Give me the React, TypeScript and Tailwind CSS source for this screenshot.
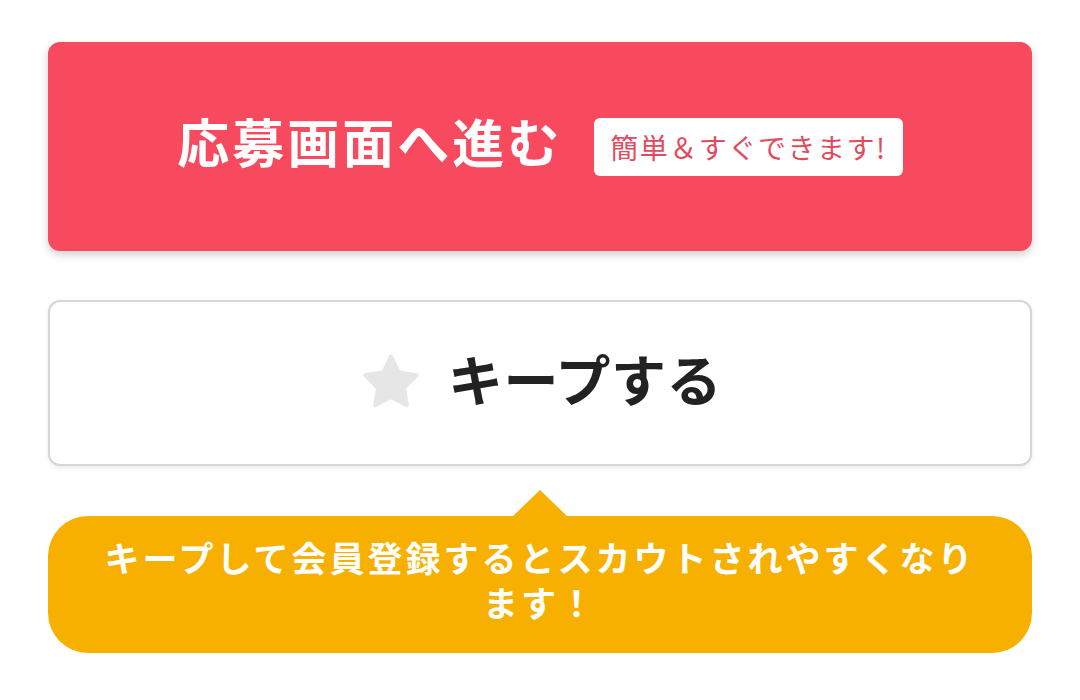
export default function App() {
  return (
    <div
      className="w-[1080px] h-[700px] bg-white px-12 pt-[42px]"
      style={{ fontFamily: '"Noto Sans CJK JP", "Noto Sans", sans-serif' }}
    >
      <button className="w-full h-[209px] rounded-xl bg-[#f74a5f] shadow-[0_4px_8px_rgba(0,0,0,0.18)] flex items-center justify-center gap-8">
        <span className="text-white font-bold text-[52px] leading-none tracking-[3px] mb-3">
          応募画面へ進む
        </span>
        <span className="bg-white rounded-md h-[58px] px-4 flex items-center text-[#e14b60] text-[28px] leading-none tracking-[1.5px]">
          簡単＆すぐできます!
        </span>
      </button>

      <button className="mt-[49px] w-full h-[166px] rounded-xl bg-white border-2 border-[#d6d6d6] shadow-[0_2px_4px_rgba(0,0,0,0.08)] flex items-center justify-center gap-6">
        <svg width="66" height="62" viewBox="0 0 24 24" className="shrink-0">
          <path
            d="M12 1.8l3.05 6.2 6.85 1-4.95 4.8 1.17 6.8L12 17.4l-6.12 3.2 1.17-6.8L2.1 9l6.85-1z"
            fill="#e6e6e6"
            stroke="#e6e6e6"
            strokeWidth="1.6"
            strokeLinejoin="round"
          />
        </svg>
        <span className="text-[#222] font-bold text-[55px] leading-none tracking-[0.5px] mb-3">
          キープする
        </span>
      </button>

      <div className="relative mt-[50px]">
        <div className="absolute left-[464px] -top-[26px] w-0 h-0 border-l-[28px] border-r-[28px] border-b-[27px] border-l-transparent border-r-transparent border-b-[#f8b000]" />
        <div className="w-full h-[137px] rounded-[40px] bg-[#f8b000] px-4 flex items-center justify-center">
          <p className="text-white font-bold text-[35px] leading-[45px] tracking-[3px] text-center mb-3">
            キープして会員登録するとスカウトされやすくなり
            <br />
            ます！
          </p>
        </div>
      </div>
    </div>
  );
}
